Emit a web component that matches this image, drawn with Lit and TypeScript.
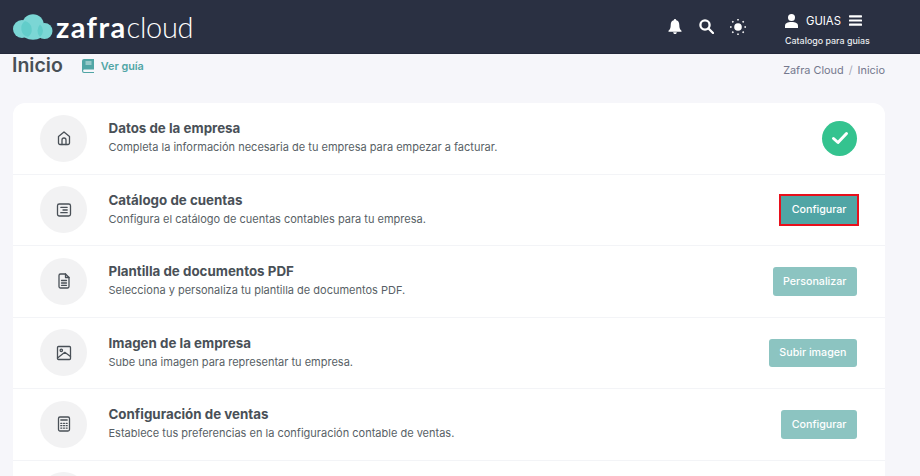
import { LitElement, html, css, svg } from "lit";
import { customElement } from "lit/decorators.js";

const icons: Record<string, unknown> = {
  home: svg`<path d="M3.500 7.600 9 3l5.500 4.600V14a1.500 1.500 0 0 1-1.500 1.500H5A1.500 1.500 0 0 1 3.500 14Z"/><path d="M7 15.500V11a2 2 0 0 1 4 0v4.500"/>`,
  list: svg`<rect x="2.500" y="3" width="13" height="12" rx="1.800"/><path d="M5.800 6.300h6.400M8 9h4.200M5.800 11.700h6.400"/>`,
  doc: svg`<path d="M4 3.500A1.500 1.500 0 0 1 5.500 2H10.500L14 5.500V14.500A1.500 1.500 0 0 1 12.500 16H5.500A1.500 1.500 0 0 1 4 14.500Z"/><path d="M10.500 2V5.500H14M6.500 8.500h5M6.500 11h5M6.500 13.300h5"/>`,
  image: svg`<rect x="2.500" y="2.500" width="13" height="13" rx="1"/><circle cx="6.300" cy="6.300" r="1.200"/><path d="M2.500 14 9.800 8.300 15.500 12.500"/>`,
  calc: svg`<rect x="3.500" y="2" width="11" height="14" rx="1.500"/><path d="M5.800 5h6.400"/><path d="M5.800 8.300h1M8.500 8.300h1M11.200 8.300h1M5.800 10.700h1M8.500 10.700h1M11.200 10.700h1M5.800 13.100h1M8.500 13.100h1M11.200 13.100h1"/>`,
};

const rows = [
  { icon: "home", title: "Datos de la empresa", desc: "Completa la información necesaria de tu empresa para empezar a facturar.", done: true },
  { icon: "list", title: "Catálogo de cuentas", desc: "Configura el catálogo de cuentas contables para tu empresa.", btn: "Configurar", active: true },
  { icon: "doc", title: "Plantilla de documentos PDF", desc: "Selecciona y personaliza tu plantilla de documentos PDF.", btn: "Personalizar" },
  { icon: "image", title: "Imagen de la empresa", desc: "Sube una imagen para representar tu empresa.", btn: "Subir imagen" },
  { icon: "calc", title: "Configuración de ventas", desc: "Establece tus preferencias en la configuración contable de ventas.", btn: "Configurar" },
  { icon: "", title: "", desc: "" },
];

@customElement("app-root")
export class AppRoot extends LitElement {
  static styles = css`
    :host {
      display: block;
      height: 476px;
      overflow: hidden;
      background: #f6f6fa;
      font-family: "Inter", "Liberation Sans", sans-serif;
      color: #495057;
    }
    .top {
      height: 53px;
      background: #2a3042;
      border-bottom: 1px solid #23283a;
      display: flex;
      align-items: center;
      color: #fff;
    }
    .logo { display: flex; align-items: center; margin-left: 13px; height: 53px; }
    .logo-text { font-family: "Lato", sans-serif; font-size: 29px; color: #fff; margin-left: 3px; line-height: 1; }
    .logo-text b { font-weight: 700; letter-spacing: 1.400px; }
    .logo-text span { font-weight: 300; margin-left: 0; letter-spacing: -0.300px; }
    .tools { margin-left: auto; display: flex; align-items: center; }
    .tools svg { display: block; }
    .bell { margin-right: 17px; }
    .search { margin-right: 16px; }
    .sun { margin-right: 39px; }
    .user { width: 135px; display: flex; flex-direction: column; padding-top: 3px; }
    .user-top { display: flex; align-items: center; height: 20px; font-size: 11.300px; font-weight: 400; }
    .user-name { margin: 0 8px 0 8px; }
    .user-sub { font-size: 8.900px; font-weight: 500; color: #e9ecef; margin-top: 4px; }
    .crumbs {
      display: flex;
      align-items: flex-start;
      height: 49px;
      padding: 0 35px 0 12px;
    }
    .page { font-size: 19.500px; font-weight: 600; color: #495057; line-height: 22px; }
    .guide { display: flex; align-items: center; margin: 3px 0 0 19px; font-size: 10.800px; font-weight: 600; color: #50a5a5; height: 18px; }
    .guide svg { margin-right: 7px; }
    .path { margin-left: auto; font-size: 10.900px; color: #74788d; margin-top: 9px; line-height: 14px; }
    .path i { font-style: normal; color: #a6a9b6; margin: 0 5px; }
    .card {
      margin-left: 13px;
      width: 872px;
      background: #fff;
      border-radius: 12px 12px 0 0;
    }
    .row {
      height: 71.500px;
      box-sizing: border-box;
      border-bottom: 1px solid #f3f4f7;
      display: flex;
      align-items: center;
      padding: 0 28px 0 27px;
    }
    .disc {
      width: 47px;
      height: 47px;
      border-radius: 50%;
      background: #f2f2f3;
      display: flex;
      align-items: center;
      justify-content: center;
      flex: none;
      margin-right: 21.500px;
    }
    .disc svg { fill: none; stroke: #495057; stroke-width: 1.300; stroke-linecap: round; stroke-linejoin: round; }
    .txt { flex: 1; margin-top: -1px; }
    .t { font-size: 13.350px; font-weight: 700; color: #495057; line-height: 18px; margin-top: -1px; }
    .d { font-size: 11px; color: #585f66; line-height: 16px; margin-top: 2px; }
    .btn {
      height: 28.500px;
      padding: 0 10.500px;
      box-sizing: border-box;
      display: flex;
      align-items: center;
      border-radius: 3px;
      background: #8cc4c1;
      color: #fff;
      font-size: 10.700px;
      font-weight: 500;
      white-space: nowrap;
    }
    .btn.active { background: #50a5a5; outline: 2px solid #e8101c; border-radius: 0; }
    .check { width: 35px; height: 35px; border-radius: 50%; background: #34c38f; display: flex; align-items: center; justify-content: center; }
  `;

  render() {
    return html`
      <header class="top">
        <div class="logo">
          <svg width="40" height="26" viewBox="0 0 40 26">
            <g fill="#7bd6d5">
              <circle cx="9" cy="15" r="9"/>
              <circle cx="20" cy="11" r="10.800"/>
              <circle cx="31.500" cy="17" r="8"/>
              <ellipse cx="20" cy="19" rx="11" ry="6.800"/>
            </g>
            <g fill="#62cdca">
              <path d="M12 7a9 9 0 0 1 3 16 9 9 0 0 1-3-16Z"/>
              <path d="M27 10.500a8 8 0 0 1 0 12.500 9 9 0 0 1 0-12.500Z"/>
            </g>
          </svg>
          <div class="logo-text"><b>zafra</b><span>cloud</span></div>
        </div>
        <div class="tools">
          <svg class="bell" width="14" height="15" viewBox="0 0 14 15" fill="#fff"><path d="M7 0a1.200 1.200 0 0 1 1.200 1.300C10.300 1.800 11.300 3.500 11.300 6c0 3 .7 4.400 2.200 5.700v1H.5v-1C2 10.400 2.700 9 2.700 6c0-2.500 1-4.200 3.100-4.700A1.200 1.200 0 0 1 7 0Z"/><path d="M5.200 13.300h3.600a1.800 1.800 0 0 1-3.600 0Z"/></svg>
          <svg class="search" width="15" height="15" viewBox="0 0 15 15" fill="none" stroke="#fff" stroke-width="2.300"><circle cx="6" cy="6" r="4.600"/><path d="m9.500 9.500 4.500 4.500" stroke-linecap="round"/></svg>
          <svg class="sun" width="16" height="16" viewBox="0 0 16 16" fill="#fff" stroke="#fff"><circle cx="8" cy="8" r="3.800" stroke="none"/><path stroke-width="1.500" d="M8 0v1.600M8 14.400V16M0 8h1.600M14.400 8H16M2.300 2.300l1.100 1.100M12.600 12.600l1.100 1.100M2.300 13.700l1.100-1.100M12.600 3.400l1.100-1.100"/></svg>
          <div class="user">
            <div class="user-top">
              <svg width="13" height="14" viewBox="0 0 13 14" fill="#fff"><circle cx="6.500" cy="3.600" r="3.500"/><path d="M0 14v-2.200C0 9.200 2.500 8 6.500 8s6.500 1.200 6.500 3.800V14Z"/></svg>
              <span class="user-name">GUIAS</span>
              <svg width="13" height="11" viewBox="0 0 13 11" fill="#fff"><rect width="13" height="2.200" y=".2" rx=".6"/><rect width="13" height="2.200" y="4.400" rx=".6"/><rect width="13" height="2.200" y="8.600" rx=".6"/></svg>
            </div>
            <div class="user-sub">Catalogo para guias</div>
          </div>
        </div>
      </header>
      <div class="crumbs">
        <div class="page">Inicio</div>
        <div class="guide">
          <svg width="12" height="14" viewBox="0 0 12 14" fill="#50a5a5"><path d="M2 0h10v10.500H2.300a1.200 1.200 0 0 0 0 2.400H12V14H2a2 2 0 0 1-2-2V2a2 2 0 0 1 2-2Z"/><path d="M3.500 3h6M3.500 5h6" stroke="#fff" stroke-width=".8"/></svg>
          Ver guía
        </div>
        <div class="path">Zafra Cloud<i>/</i>Inicio</div>
      </div>
      <main class="card">
        ${rows.map(
          (r) => html`
            <div class="row">
              <div class="disc">${r.icon ? html`<svg width="18" height="18" viewBox="0 0 18 18">${icons[r.icon]}</svg>` : ""}</div>
              <div class="txt">
                <div class="t">${r.title}</div>
                <div class="d">${r.desc}</div>
              </div>
              ${r.done
                ? html`<div class="check"><svg width="18" height="14" viewBox="0 0 18 14" fill="none" stroke="#fff" stroke-width="3" stroke-linecap="round" stroke-linejoin="round"><path d="m2.500 7.500 4.500 4 8.500-9"/></svg></div>`
                : r.btn
                ? html`<div class="btn ${r.active ? "active" : ""}">${r.btn}</div>`
                : ""}
            </div>
          `
        )}
      </main>
    `;
  }
}
